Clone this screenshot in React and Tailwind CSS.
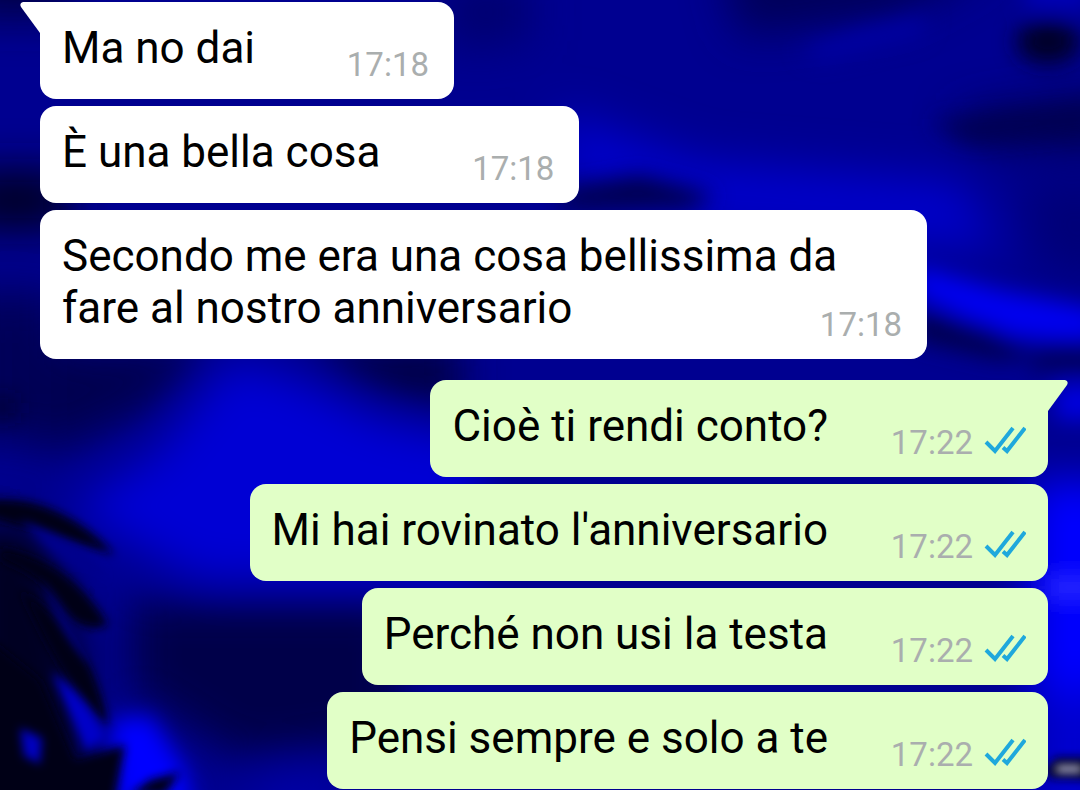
const messages = [
  { id: 1, text: 'Ma no dai', time: '17:18', first: true },
  { id: 2, text: 'È una bella cosa', time: '17:18' },
  { id: 3, text: 'Secondo me era una cosa bellissima da fare al nostro anniversario', time: '17:18' },
  { id: 4, text: 'Cioè ti rendi conto?', time: '17:22', mine: true, first: true },
  { id: 5, text: "Mi hai rovinato l'anniversario", time: '17:22', mine: true },
  { id: 6, text: 'Perché non usi la testa', time: '17:22', mine: true },
  { id: 7, text: 'Pensi sempre e solo a te', time: '17:22', mine: true },
];

function ReadTicks() {
  return (
    <svg
      width="42"
      height="36"
      viewBox="0 0 42 36"
      fill="none"
      stroke="#1fa8dc"
      strokeWidth="4"
      role="img"
      aria-label="Letto"
    >
      <path d="M2 17 11 26 29 3" />
      <path d="M19 22.5 23 26 41 3" />
    </svg>
  );
}

function Tail({ mine }) {
  return (
    <svg
      width="40"
      height="32"
      viewBox="0 0 40 32"
      className={`absolute top-0 ${mine ? '-right-5 fill-[#e1ffc7]' : '-left-5 -scale-x-100 fill-white'}`}
      aria-hidden="true"
    >
      <path d="M0 0H37Q41 1 39 5L20 31H0Z" />
    </svg>
  );
}

function Wallpaper() {
  return (
    <svg
      className="absolute inset-0 h-full w-full"
      viewBox="0 0 1080 790"
      preserveAspectRatio="none"
      aria-hidden="true"
    >
      <defs>
        <filter id="soft" x="-50%" y="-50%" width="200%" height="200%">
          <feGaussianBlur stdDeviation="22" />
        </filter>
        <filter id="mid" x="-50%" y="-50%" width="200%" height="200%">
          <feGaussianBlur stdDeviation="11" />
        </filter>
        <filter id="fine" x="-50%" y="-50%" width="200%" height="200%">
          <feGaussianBlur stdDeviation="5" />
        </filter>
      </defs>
      <rect width="1080" height="790" fill="#000090" />

      <g filter="url(#soft)">
        <path d="M560 110 700 160 960 180 1000 250 700 230 560 180Z" fill="#0000c8" />
        <path d="M720 -40H1000L900 15 740 35Z" fill="#000058" />
        <path d="M440 -20H530V40L450 50Z" fill="#000070" />
        <path d="M960 115 1120 90V150L960 145Z" fill="#000050" />
        <path d="M1020 180H1120V280L1040 270Z" fill="#000078" />
        <path d="M-40 170H70V230H-40Z" fill="#000028" />
        <path d="M-40 -40H70V15H-40Z" fill="#000040" />
        <path d="M-40 290H60V440H-40Z" fill="#000058" />
        <path d="M40 345H220L150 410 40 460Z" fill="#000050" />
        <path d="M290 345H460V415L370 390Z" fill="#000040" />
        <path d="M230 360 300 380 380 420 480 440V580L200 580 70 510 160 450Z" fill="#0000d4" />
        <path d="M130 600H400V740L240 760 130 690Z" fill="#000048" />
        <path d="M260 770H340V820H250Z" fill="#0000a8" />
        <path d="M1030 480H1120V690H1030Z" fill="#0000ff" />
        <path d="M1030 690H1120V820H1030Z" fill="#0000d0" />
        <path d="M-40 520 40 520 80 640 90 830H-40Z" fill="#000020" />
      </g>

      <g filter="url(#mid)">
        <ellipse cx="1048" cy="42" rx="32" ry="22" fill="#000028" />
        <path d="M1020 -20H1090V10H1030Z" fill="#0000b8" />
        <path d="M860 30 930 15 920 35 820 60 800 50Z" fill="#0000a8" />
        <path d="M915 265 1000 290 1100 310V345L1000 335 915 295Z" fill="#0000f0" />
        <path d="M915 310 985 325 1040 350 1000 360 915 340Z" fill="#000050" />
        <path d="M1040 340H1100V372H1030Z" fill="#000060" />
        <path d="M930 122 1100 108V126L970 140Z" fill="#000050" />
        <path d="M560 190 640 175 715 195 690 210H560Z" fill="#000050" />
        <path d="M1055 385H1100V420H1055Z" fill="#0000e0" />
        <path d="M110 720 150 715 185 770 195 810H115Z" fill="#0000ff" />
        <path d="M1045 575H1100V600H1045Z" fill="#2828ff" />
        <path d="M-10 400H15V416H-10Z" fill="#000028" />
      </g>

      <g filter="url(#fine)" fill="#000018">
        <path d="M-10 500Q60 495 115 555 50 535-10 518Z" />
        <path d="M0 548Q70 560 108 625 80 635 60 605 40 575 0 560Z" />
        <path d="M20 590Q90 630 108 725 70 700 20 590Z" />
        <path d="M-10 640 40 680 75 760 125 745 112 810H-10Z" />
        <path d="M130 795 150 780 180 772 165 795Z" />
        <path d="M1045 770 1056 758 1100 758V780L1050 778Z" />
      </g>

      <g filter="url(#fine)">
        <path d="M20 520Q90 545 105 578 70 575 20 520Z" fill="#00008c" />
        <path d="M40 580Q75 625 92 665 65 645 40 580Z" fill="#000078" />
        <path d="M52 672Q90 700 106 738L86 750Z" fill="#0000c8" />
        <path d="M20 728 42 738 40 764 24 756Z" fill="#0000c0" />
        <path d="M1056 766H1082V772H1056Z" fill="#d8d8ff" />
      </g>
    </svg>
  );
}

function Bubble({ message }) {
  const { text, time, mine, first } = message;

  return (
    <li
      className={`relative max-w-[88%] rounded-2xl pt-5 pr-[88px] pb-[25px] pl-[22px] ${
        mine ? 'self-end bg-[#e1ffc7]' : 'self-start bg-white'
      } ${mine && first ? 'mt-[14px]' : ''}`}
    >
      {first && <Tail mine={mine} />}
      <p className="relative text-[44px] leading-[52px] text-black">
        {text}
        {/* keeps the last line clear of the time */}
        <span className={`inline-block h-1 ${mine ? 'w-[132px]' : 'w-[111px]'}`} />
      </p>
      <div
        className={`absolute bottom-[15px] flex items-center gap-[11px] ${
          mine ? 'right-[22px]' : 'right-[25px]'
        }`}
      >
        <time className="text-[33px] leading-[39px] text-[#aaaeae]">{time}</time>
        {mine && <ReadTicks />}
      </div>
    </li>
  );
}

export default function App() {
  return (
    <main className="relative min-h-screen overflow-hidden bg-[#000090] font-[Roboto,sans-serif]">
      <Wallpaper />
      <ul className="relative flex flex-col gap-[7px] pt-[2px] pr-8 pl-10">
        {messages.map((message) => (
          <Bubble key={message.id} message={message} />
        ))}
      </ul>
    </main>
  );
}
